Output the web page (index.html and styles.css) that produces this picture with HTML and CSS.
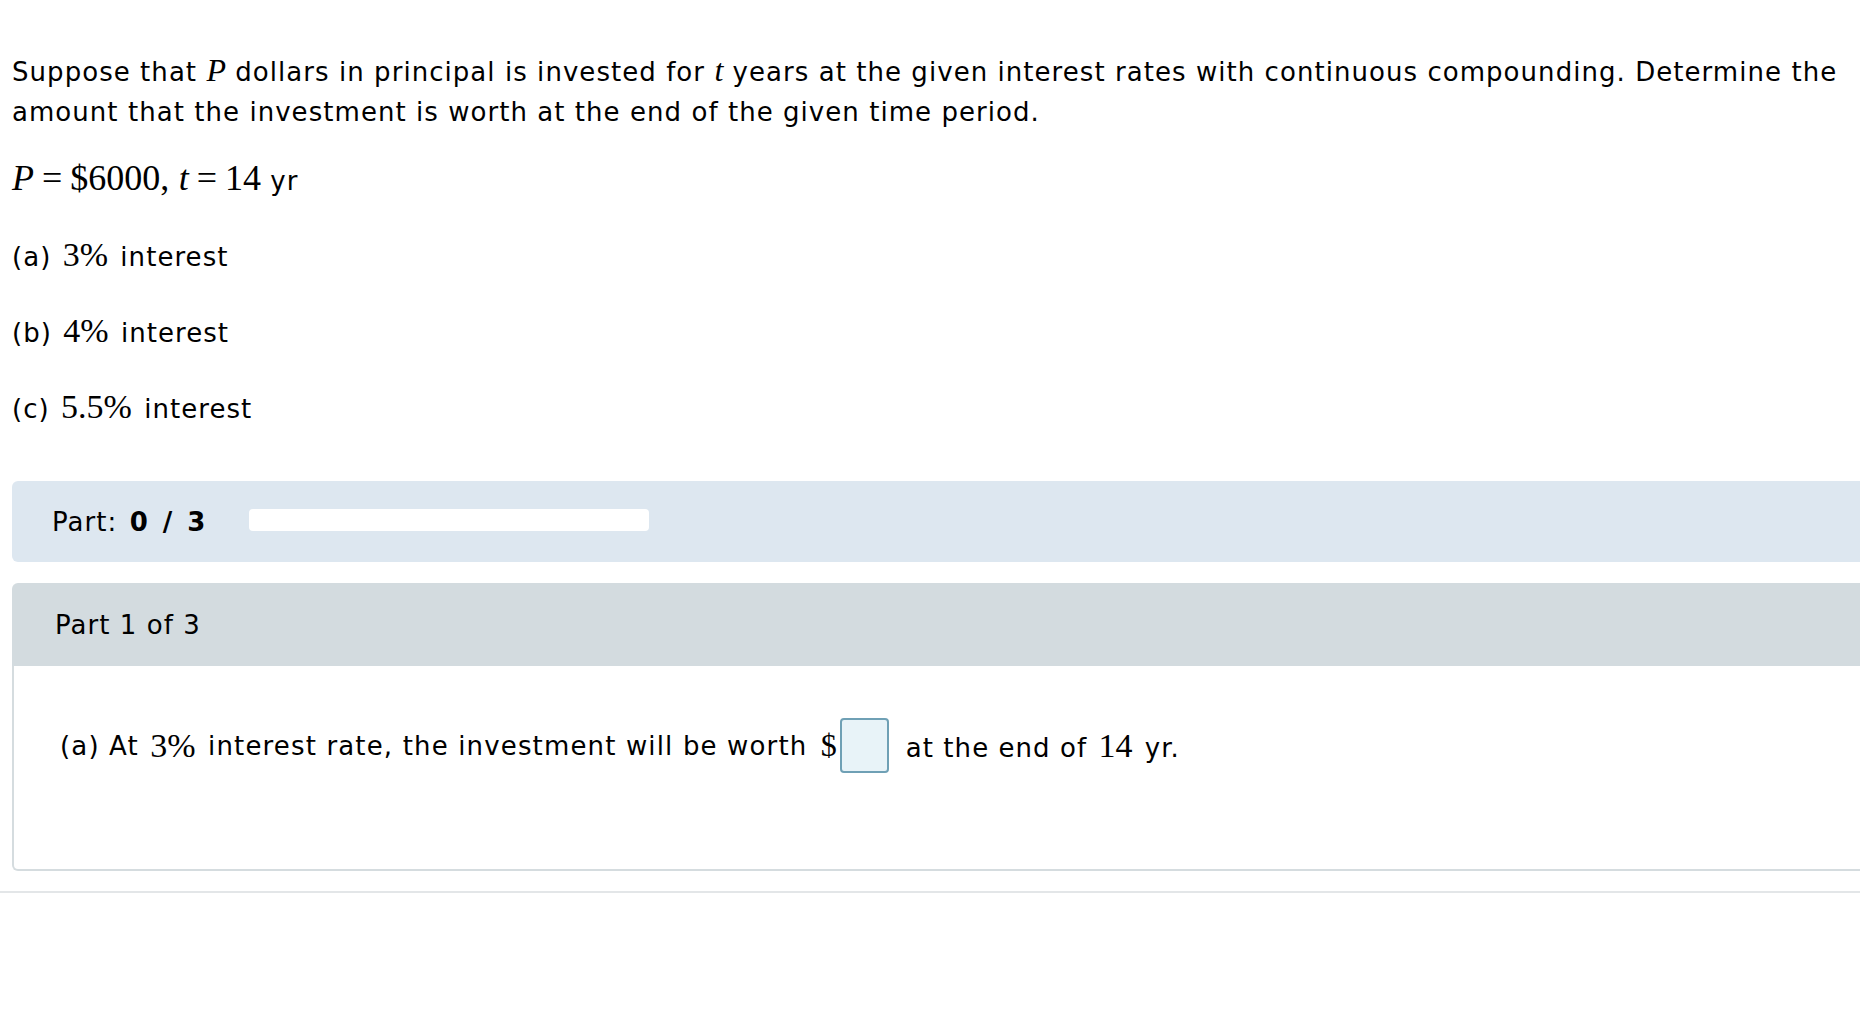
FILE: index.html
```html
<!DOCTYPE html>
<html>
<head>
<meta charset="utf-8">
<link rel="stylesheet" href="styles.css">
</head>
<body>
<div class="page">
  <div class="question">
    <p class="intro">Suppose that <span class="m mi">P</span> dollars in principal is invested for <span class="m mi">t</span> years at the given interest rates with continuous compounding. Determine the amount that the investment is worth at the end of the given time period.</p>
    <p class="given"><span class="mbig mi">P</span><span class="mbig eq">=</span><span class="mbig">$6000,</span> <span class="mbig mi">t</span><span class="mbig eq">=</span><span class="mbig">14</span> yr</p>
    <p class="item">(a) <span class="m num">3%</span> interest</p>
    <p class="item">(b) <span class="m num">4%</span> interest</p>
    <p class="item">(c) <span class="m num">5.5%</span> interest</p>
  </div>
  <div class="progress">
    <span class="plabel">Part: <b>0 / 3</b></span>
    <span class="pbar"></span>
  </div>
  <div class="part">
    <div class="phead">Part 1 of 3</div>
    <div class="pbody">
      <div class="answer">(a) At <span class="m num">3%</span> interest rate, the investment will be worth <span class="m dollar">$</span><span class="inbox"></span><span class="after">at the end of <span class="m num">14</span> yr.</span></div>
    </div>
  </div>
</div>
<div class="rule"></div>
</body>
</html>
```

FILE: styles.css
```css
html, body {
  margin: 0;
  padding: 0;
  background: #ffffff;
}
body {
  font-family: "DejaVu Sans", Verdana, sans-serif;
  font-size: 26px;
  letter-spacing: 1.05px;
  color: #000000;
}
.page {
  padding: 0 0 0 12px;
}
.question {
  padding-top: 50px;
}
.intro {
  margin: 0;
  line-height: 40px;
}
.m {
  font-family: "Liberation Serif", "Times New Roman", serif;
  font-size: 32px;
  letter-spacing: normal;
}
.num {
  font-size: 34px;
  margin: 0 3px 0 2px;
  word-spacing: 0;
}
.mi {
  font-style: italic;
}
.mbig {
  font-family: "Liberation Serif", "Times New Roman", serif;
  font-size: 36px;
  letter-spacing: normal;
}
.eq {
  margin: 0 8px;
}
.given {
  margin: 26px 0 0 0;
  line-height: 40px;
}
.item {
  margin: 34px 0 0 0;
  line-height: 40px;
}
.progress {
  margin-top: 52px;
  height: 81px;
  background: #dde7f0;
  border-radius: 6px 0 0 6px;
  display: flex;
  align-items: center;
  padding-left: 40px;
  gap: 41px;
}
.plabel b {
  font-weight: bold;
  letter-spacing: 3px;
  margin-left: 3px;
}
.pbar {
  width: 400px;
  height: 22px;
  background: #ffffff;
  border-radius: 4px;
  margin-top: -3px;
}
.part {
  margin-top: 21px;
}
.phead {
  height: 83px;
  background: #d3dbdf;
  border-radius: 6px 0 0 0;
  display: flex;
  align-items: center;
  padding-left: 43px;
}
.pbody {
  height: 203px;
  border: 2px solid #d5dcdf;
  border-top: none;
  border-right: none;
  border-radius: 0 0 0 6px;
}
.answer {
  padding: 52px 0 0 46px;
  display: flex;
  align-items: center;
  white-space: pre;
  letter-spacing: 1.15px;
}
.dollar {
  margin-left: 4px;
}
.inbox {
  display: inline-block;
  width: 45px;
  height: 51px;
  border: 2px solid #6fa0b5;
  border-radius: 4px;
  background: #e8f3f8;
  margin-left: 3px;
}
.after {
  margin-left: 17px;
  letter-spacing: 1.05px;
}
.rule {
  margin-top: 20px;
  height: 2px;
  background: #e3e6e8;
}
```
